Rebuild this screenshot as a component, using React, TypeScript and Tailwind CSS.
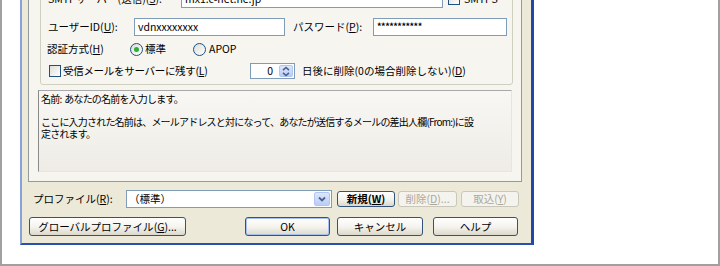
import type { ReactNode } from 'react'

function Mn({ k }: { k: string }) {
  return (
    <>
      (<span className="underline underline-offset-1">{k}</span>)
    </>
  )
}

function Check({ className = '' }: { className?: string }) {
  return (
    <span
      className={`inline-block h-[12px] w-[12px] shrink-0 border border-[#1c5180] bg-linear-to-br from-[#dcdcd7] to-white ${className}`}
    />
  )
}

function Radio({ checked = false }: { checked?: boolean }) {
  return (
    <span className="flex h-[13px] w-[13px] shrink-0 items-center justify-center rounded-full border border-[#1c5180] bg-linear-to-br from-[#dcdcd7] to-white">
      {checked && <span className="h-[5px] w-[5px] rounded-full bg-[#2fae2f]" />}
    </span>
  )
}

function XpButton({
  children,
  className = '',
  disabled = false,
}: {
  children: ReactNode
  className?: string
  disabled?: boolean
}) {
  return (
    <button
      className={`flex items-center justify-center rounded-[3px] border ${
        disabled
          ? 'border-[#c9c7ba] bg-[#f4f3ee] text-[#aca899]'
          : 'border-[#32547c] bg-linear-to-b from-white via-[#f5f4ef] to-[#dcd8cc] text-black'
      } ${className}`}
    >
      {children}
    </button>
  )
}

export default function App() {
  return (
    <div className="h-[266px] w-[720px] overflow-hidden whitespace-nowrap border-x-2 border-b-2 border-[#a0a0a0] bg-white font-['Noto_Sans_CJK_JP','Noto_Sans',sans-serif] text-[10.5px] text-black">
      {/* dialog window */}
      <div className="ml-[18px] -mt-[60px] flex h-[305px] w-[514px] flex-col border-b-2 border-l-2 border-r-[3px] border-b-[#2a4fb0] border-l-[#86a2d8] border-r-[#2148a8] bg-[#ece9d8]">
        {/* tab panel */}
        <div className="ml-[6px] mt-[20px] h-[222px] w-[494px] border border-[#919b9c] bg-[#f6f5f0]">
          {/* group box */}
          <div className="ml-[11px] mt-[9px] flex w-[473px] flex-col rounded-[3px] border border-[#d0d0bf] pb-[5px] pt-[19px]">
            <div className="flex h-[18px] items-center pl-[7px]">
              <span className="w-[133px]">
                SMTPサーバー(送信)<Mn k="S" />:
              </span>
              <div className="flex h-full w-[262px] items-center border border-[#7f9db9] bg-white px-[3px]">
                mx1.c-net.ne.jp
              </div>
              <Check className="ml-[5px]" />
              <span className="ml-[4px]">SMTPS</span>
            </div>

            <div className="mt-[10px] flex h-[18px] items-center pl-[7px]">
              <span className="w-[86px]">
                ユーザーID<Mn k="U" />:
              </span>
              <div className="flex h-full w-[151px] items-center border border-[#7f9db9] bg-white px-[3px]">
                vdnxxxxxxxx
              </div>
              <span className="ml-[8px] w-[80px]">
                パスワード<Mn k="P" />:
              </span>
              <div className="flex h-full w-[134px] items-center border border-[#7f9db9] bg-white px-[3px] text-[9px] font-bold tracking-[-0.5px]">
                ***********
              </div>
            </div>

            <div className="mt-[6px] flex h-[14px] items-center pl-[6px]">
              <span className="w-[83px]">
                認証方式<Mn k="H" />
              </span>
              <span className="flex w-[63px] items-center gap-[2px]">
                <Radio checked />
                標準
              </span>
              <span className="flex items-center gap-[3px]">
                <Radio />
                APOP
              </span>
            </div>

            <div className="mt-[7px] flex h-[16px] items-center pl-[8px]">
              <Check />
              <span className="ml-[2px] w-[187px] tracking-[-0.3px]">
                受信メールをサーバーに残す<Mn k="L" />
              </span>
              <div className="flex h-full w-[45px] border border-[#7f9db9] bg-white">
                <span className="flex flex-1 items-center justify-end pr-[6px]">0</span>
                <span className="my-px mr-px flex w-[14px] items-center justify-center rounded-[2px] border border-[#b2c6f0] bg-linear-to-b from-[#dce7fd] to-[#b9cdf8]">
                  <svg width="8" height="11" viewBox="0 0 8 11" fill="none" stroke="#4d6185" strokeWidth="1.6">
                    <path d="M1 4.2 4 1.5 7 4.2" />
                    <path d="M1 6.8 4 9.5 7 6.8" />
                  </svg>
                </span>
              </div>
              <span className="ml-[7px]">
                日後に削除(0の場合削除しない)<Mn k="D" />
              </span>
            </div>
          </div>

          {/* help text */}
          <div className="ml-[9px] mt-[5px] h-[82px] w-[474px] border border-b-[#e8e6dc] border-l-[#8a8a8a] border-r-[#e8e6dc] border-t-[#a8a8a8] bg-linear-to-b from-[#f8f7f4] to-[#eeece5] pl-[2px] pt-[2px] text-[10px] leading-[12px] tracking-[-0.8px]">
            <div>名前:&nbsp; あなたの名前を入力します。</div>
            <div className="h-[11px]" />
            <div>ここに入力された名前は、メールアドレスと対になって、あなたが送信するメールの差出人欄(From:)に設</div>
            <div>定されます。</div>
          </div>
        </div>

        {/* profile row */}
        <div className="ml-[11px] mt-[8px] flex h-[18px] items-center">
          <span className="w-[93px]">
            プロファイル<Mn k="R" />:
          </span>
          <div className="flex h-full w-[206px] border border-[#7f9db9] bg-white">
            <span className="flex flex-1 items-center pl-[2px]">（標準）</span>
            <span className="m-px flex w-[16px] items-center justify-center rounded-[2px] border border-[#b2c6f0] bg-linear-to-b from-[#dce7fd] to-[#b9cdf8]">
              <svg width="8" height="6" viewBox="0 0 8 6" fill="none" stroke="#4d6185" strokeWidth="1.8">
                <path d="M1 1.5 4 4.5 7 1.5" />
              </svg>
            </span>
          </div>
          <XpButton className="ml-[5px] h-[16px] w-[58px] font-semibold">
            新規<Mn k="W" />
          </XpButton>
          <XpButton disabled className="ml-[3px] h-[16px] w-[59px]">
            削除<Mn k="D" />...
          </XpButton>
          <XpButton disabled className="ml-[4px] h-[16px] w-[58px]">
            取込<Mn k="Y" />
          </XpButton>
        </div>

        {/* buttons row */}
        <div className="ml-[7px] mt-[9px] flex h-[19px]">
          <XpButton className="h-full w-[157px]">
            グローバルプロファイル<Mn k="G" />...
          </XpButton>
          <XpButton className="ml-[59px] h-full w-[85px] shadow-[inset_0_0_0_1px_#a9c1ee]">OK</XpButton>
          <XpButton className="ml-[7px] h-full w-[86px]">キャンセル</XpButton>
          <XpButton className="ml-[10px] h-full w-[85px]">ヘルプ</XpButton>
        </div>
      </div>
    </div>
  )
}
